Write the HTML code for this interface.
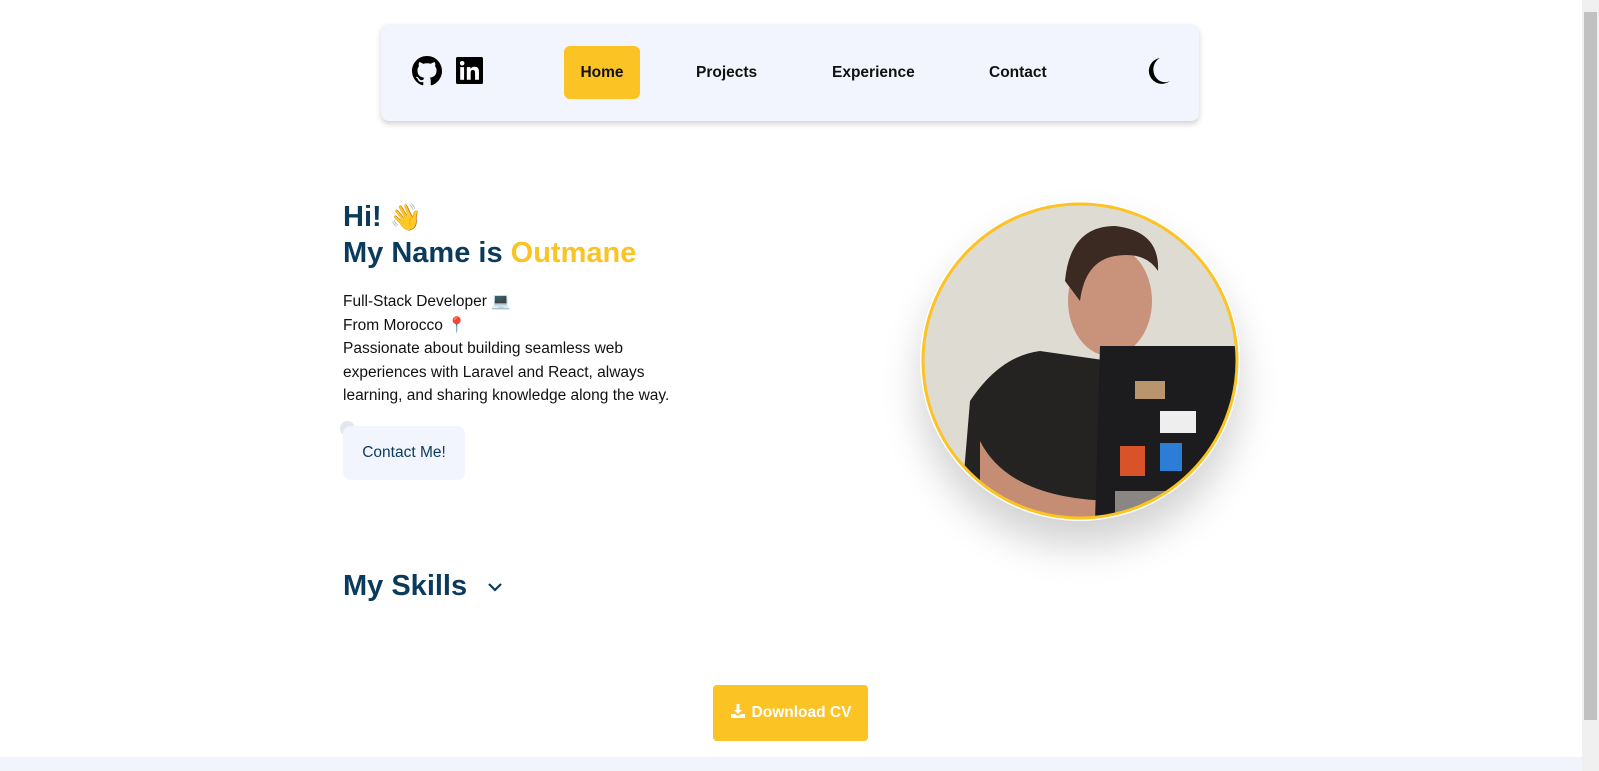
<!DOCTYPE html>
<html><head><meta charset="utf-8"><style>
*{margin:0;padding:0;box-sizing:border-box}
body{width:1599px;height:771px;overflow:hidden;background:#fff;font-family:"Liberation Sans",sans-serif;position:relative}
.nav{position:absolute;left:381px;top:24px;width:818px;height:97px;background:#f2f5fd;border-radius:8px;box-shadow:0 3px 6px rgba(0,0,0,.18)}
.nav a{position:absolute;font-weight:bold;font-size:15.5px;color:#111;top:40px}
.home{position:absolute;left:183px;top:22px;width:76px;height:53px;background:#fbc324;border-radius:6px;font-weight:bold;font-size:15.5px;line-height:53px;text-align:center;color:#111}
.t{position:absolute;color:#0a3a5c}
p.d{position:absolute;left:343px;top:290px;font-size:15.5px;line-height:23.5px;color:#111;width:345px}
.btn{position:absolute;left:343px;top:426px;width:122px;height:54px;background:#f2f5fd;border-radius:8px;color:#0a3a5c;font-size:15.5px;line-height:54px;text-align:center}
.dl{position:absolute;left:713px;top:685px;width:155px;height:56px;background:#fbc324;border-radius:4px;color:#fff;font-weight:bold;font-size:15.5px;line-height:56px;text-align:center}
.sb{position:absolute;right:0;top:0;width:17px;height:771px;background:#f0f0f0}
.sb div{position:absolute;left:2px;top:12px;width:13px;height:708px;background:#c1c1c1}
</style></head><body>
<div class="nav">
<svg style="position:absolute;left:31px;top:32px" width="30" height="30" viewBox="0 0 16 16"><path fill="#000" d="M8 0C3.58 0 0 3.58 0 8c0 3.54 2.29 6.53 5.47 7.59.4.07.55-.17.55-.38v-1.33c-2.23.48-2.7-1.07-2.7-1.07-.36-.92-.89-1.17-.89-1.17-.73-.5.06-.49.06-.49.8.06 1.23.83 1.23.83.71 1.23 1.87.87 2.33.66.07-.52.28-.87.51-1.07-1.78-.2-3.65-.89-3.65-3.95 0-.87.31-1.59.82-2.15-.08-.2-.36-1.02.08-2.12 0 0 .67-.21 2.2.82A7.6 7.6 0 0 1 8 3.87c.68 0 1.36.09 2 .27 1.53-1.04 2.2-.82 2.2-.82.44 1.1.16 1.92.08 2.12.51.56.82 1.27.82 2.15 0 3.07-1.87 3.75-3.65 3.95.29.25.54.73.54 1.48v2.2c0 .21.15.46.55.38A8 8 0 0 0 16 8c0-4.42-3.58-8-8-8z"/></svg>
<svg style="position:absolute;left:75px;top:33px" width="27" height="27" viewBox="0 0 16 16"><rect width="16" height="16" rx="1" fill="#000"/><rect x="2.5" y="6" width="2.3" height="7.5" fill="#fff"/><circle cx="3.65" cy="3.7" r="1.35" fill="#fff"/><path fill="#fff" d="M6.4 6h2.2v1.1c.4-.7 1.2-1.3 2.4-1.3 2.2 0 2.6 1.4 2.6 3.3v4.4h-2.3V9.6c0-.9-.1-1.9-1.3-1.9S8.7 8.6 8.7 9.5v4H6.4z"/></svg>
<div class="home">Home</div>
<a style="left:315px">Projects</a><a style="left:451px">Experience</a><a style="left:608px">Contact</a>
<svg style="position:absolute;left:764px;top:32px" width="26" height="30" viewBox="0 0 26 30"><path fill="#000" d="M15 2A13 13 0 1 0 25 25 11 12 0 0 1 15 2z"/></svg>
</div>
<div class="t" style="left:343px;top:201px;font-size:29px;font-weight:bold">Hi! <span style="font-size:26px">👋</span></div>
<div class="t" style="left:343px;top:237px;font-size:29px;font-weight:bold">My Name is <span style="color:#fbc324">Outmane</span></div>
<p class="d">Full-Stack Developer 💻<br>From Morocco 📍<br>Passionate about building seamless web experiences with Laravel and React, always learning, and sharing knowledge along the way.</p>
<div style="position:absolute;left:340px;top:421px;width:15px;height:15px;border-radius:50%;background:#e3e6ee"></div>
<div class="btn">Contact Me!</div>
<div class="t" style="left:343px;top:570px;font-size:29px;font-weight:bold">My Skills</div>
<svg style="position:absolute;left:486px;top:580px" width="18" height="14" viewBox="0 0 18 14"><path d="M3 4l6 6 6-6" stroke="#0a3a5c" stroke-width="2.2" fill="none"/></svg>
<div style="position:absolute;left:920px;top:201px;width:320px;height:320px;border-radius:50%;box-shadow:0 25px 40px rgba(0,0,0,.18)"></div>
<svg style="position:absolute;left:920px;top:201px" width="320" height="320" viewBox="0 0 320 320">
<defs><clipPath id="c"><circle cx="160" cy="160" r="156"/></clipPath></defs>
<g clip-path="url(#c)">
<rect width="320" height="320" fill="#dedbd2"/>
<path d="M40 320 L50 200 Q80 155 120 150 L190 160 L200 320Z" fill="#252322"/>
<ellipse cx="190" cy="100" rx="42" ry="55" fill="#c9927a"/>
<path d="M145 80 Q150 25 195 25 Q240 30 238 70 Q225 50 195 55 Q165 60 160 100Z" fill="#3a2a22"/>
<path d="M60 240 Q90 300 200 300 L200 320 L60 320Z" fill="#c58d74"/>
<path d="M180 145 L320 145 L320 320 L175 320Z" fill="#1c1c1e"/>
<rect x="215" y="180" width="30" height="18" fill="#b9956e"/>
<rect x="240" y="210" width="36" height="22" fill="#eee"/>
<rect x="240" y="242" width="22" height="28" fill="#2b7dd6"/>
<rect x="200" y="245" width="25" height="30" fill="#d8532a"/>
<rect x="270" y="275" width="25" height="25" fill="#e8c23c"/>
<rect x="195" y="290" width="80" height="30" fill="#8a8683"/>
</g>
<circle cx="160" cy="160" r="157" fill="none" stroke="#fbc324" stroke-width="3"/>
</svg>
<div class="dl"><svg width="16" height="16" viewBox="0 0 16 16" style="vertical-align:-2px;margin-right:6px"><path fill="#fff" d="M6.5 1h3v6h2.5L8 11 4 7h2.5zM1 11h4l3 2 3-2h4v4H1z"/></svg>Download CV</div>
<div style="position:absolute;left:0;top:757px;width:1582px;height:14px;background:#f1f4fb"></div>
<div class="sb"><div></div></div>
</body></html>
